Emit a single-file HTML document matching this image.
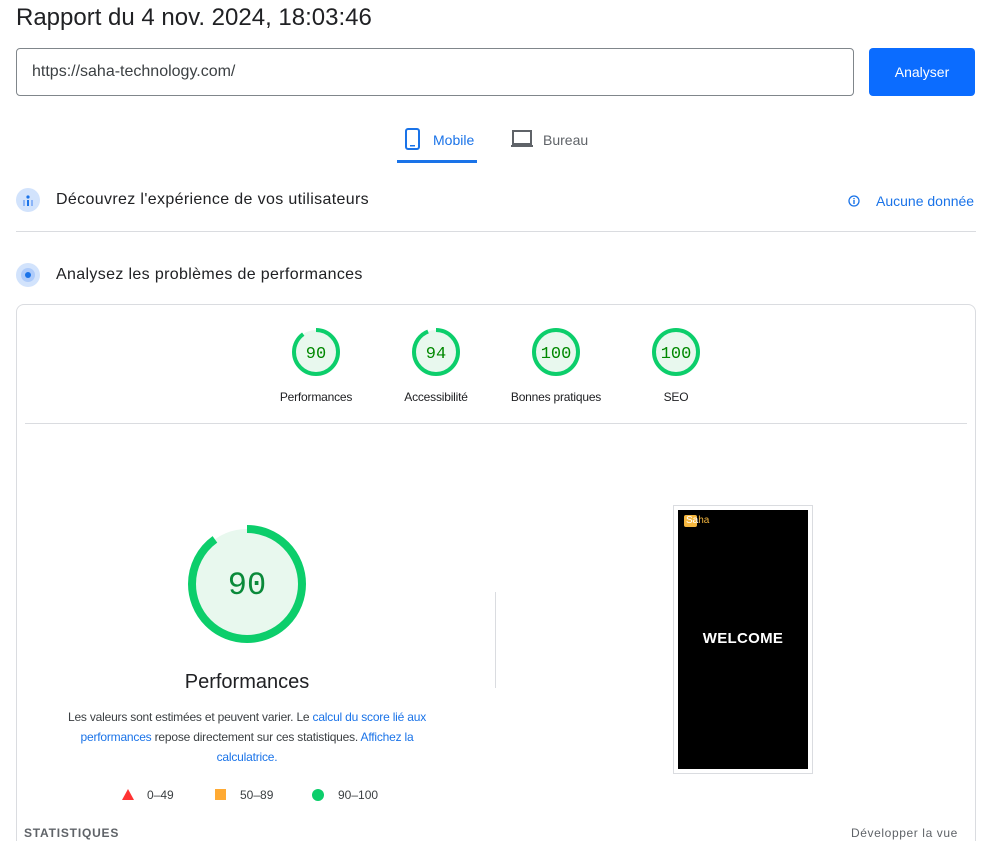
<!DOCTYPE html><html style="width:990px;height:841px;overflow:hidden"><head><style>
body{margin:0;width:990px;height:841px;overflow:hidden;background:#fff;font-family:"Liberation Sans",Roboto,sans-serif;color:#202124;position:relative}
.a{position:absolute}
.lbl{font-size:12px;color:#202124;text-align:center;width:120px;letter-spacing:-0.2px}
</style></head><body>
<div class="a" style="left:16px;top:4px;font-size:24px;">Rapport du 4 nov. 2024, 18:03:46</div>
<div class="a" style="left:16px;top:48px;width:836px;height:46px;border:1px solid #80868b;border-radius:4px;"></div>
<div class="a" style="left:32px;top:63px;font-size:16px;color:#3c4043">https://saha-technology.com/</div>
<div class="a" style="left:869px;top:48px;width:106px;height:48px;background:#0b6cff;border-radius:4px;color:#fff;font-size:14px;line-height:48px;text-align:center;">Analyser</div>
<svg class="a" style="left:403px;top:127px" width="20" height="24"><rect x="3" y="2" width="13" height="20" rx="2" fill="none" stroke="#1a73e8" stroke-width="2"/><rect x="7" y="18" width="5" height="1.5" fill="#1a73e8"/></svg>
<div class="a" style="left:433px;top:132px;font-size:14px;color:#1a73e8;">Mobile</div>
<div class="a" style="left:397px;top:160px;width:80px;height:3px;background:#1a73e8"></div>
<svg class="a" style="left:510px;top:129px" width="24" height="20"><rect x="3" y="2" width="18" height="13" fill="none" stroke="#5f6368" stroke-width="2"/><rect x="1" y="16" width="22" height="2" fill="#5f6368"/></svg>
<div class="a" style="left:543px;top:132px;font-size:14px;color:#5f6368;">Bureau</div>
<svg class="a" style="left:16px;top:188px" width="24" height="24"><circle cx="12" cy="12" r="12" fill="#d2e3fc"/><circle cx="12" cy="9" r="1.6" fill="#1a73e8"/><rect x="7" y="12" width="2" height="6" fill="#8ab4f8"/><rect x="11" y="12" width="2" height="6" fill="#1a73e8"/><rect x="15" y="12" width="2" height="6" fill="#8ab4f8"/></svg>
<div class="a" style="left:56px;top:191px;font-size:16px;letter-spacing:0.35px">Découvrez l'expérience de vos utilisateurs</div>
<svg class="a" style="left:847px;top:194px" width="14" height="14"><circle cx="7" cy="7" r="5" fill="none" stroke="#1a73e8" stroke-width="1.3"/><rect x="6.3" y="6" width="1.4" height="4" fill="#1a73e8"/><rect x="6.3" y="4" width="1.4" height="1.2" fill="#1a73e8"/></svg>
<div class="a" style="left:876px;top:193px;font-size:14px;color:#1a73e8">Aucune donnée</div>
<div class="a" style="left:16px;top:231px;width:960px;height:1px;background:#dadce0"></div>
<svg class="a" style="left:16px;top:263px" width="24" height="24"><circle cx="12" cy="12" r="12" fill="#d2e3fc"/><circle cx="12" cy="12" r="7" fill="#aecbfa"/><circle cx="12" cy="12" r="3" fill="#1a73e8"/></svg>
<div class="a" style="left:56px;top:266px;font-size:16px;letter-spacing:0.35px">Analysez les problèmes de performances</div>
<div class="a" style="left:16px;top:304px;width:958px;height:560px;border:1px solid #dadce0;border-radius:8px;"></div>
<div class="a" style="left:25px;top:423px;width:942px;height:1px;background:#dadce0"></div>
<svg class="a" style="left:0;top:0" width="990" height="841">
<g fill="#e6f4ea" stroke="#0cce6b" stroke-width="4">
<circle cx="316" cy="352" r="22" fill="#e8f8ee" stroke="none"/>
<circle cx="316" cy="352" r="22" fill="none" stroke-dasharray="124.4 138.2" transform="rotate(-90 316 352)"/>
<circle cx="436" cy="352" r="22" fill="#e8f8ee" stroke="none"/>
<circle cx="436" cy="352" r="22" fill="none" stroke-dasharray="129.9 138.2" transform="rotate(-90 436 352)"/>
<circle cx="556" cy="352" r="22" fill="#e8f8ee"/>
<circle cx="676" cy="352" r="22" fill="#e8f8ee"/>
<circle cx="247" cy="584" r="55" fill="#e8f8ee" stroke="none"/>
<circle cx="247" cy="584" r="55" fill="none" stroke-width="8" stroke-dasharray="311 345.6" transform="rotate(-90 247 584)"/>
</g>
<g font-family="Liberation Mono,monospace" fill="#008800" text-anchor="middle">
<text x="316" y="358" font-size="17">90</text><text x="436" y="358" font-size="17">94</text><text x="556" y="358" font-size="17">100</text><text x="676" y="358" font-size="17">100</text>
<text x="247" y="594" font-size="32" fill="#0a8a3a">90</text></g>
<path d="M128 789 L134 800 L122 800Z" fill="#ff3333"/><rect x="215" y="789" width="11" height="11" fill="#ffaa33"/><circle cx="318" cy="795" r="6" fill="#0cce6b"/>
</svg>
<div class="a lbl" style="left:256px;top:390px">Performances</div>
<div class="a lbl" style="left:376px;top:390px">Accessibilité</div>
<div class="a lbl" style="left:496px;top:390px">Bonnes pratiques</div>
<div class="a lbl" style="left:616px;top:390px">SEO</div>
<div class="a" style="left:97px;top:671px;width:300px;text-align:center;font-size:20px">Performances</div>
<div class="a" style="left:57px;top:707px;width:380px;text-align:center;font-size:12px;line-height:20px;color:#3c4043;letter-spacing:-0.2px">Les valeurs sont estimées et peuvent varier. Le <span style="color:#1a73e8">calcul du score lié aux performances</span> repose directement sur ces statistiques. <span style="color:#1a73e8">Affichez la calculatrice.</span></div>
<div class="a" style="left:147px;top:788px;font-size:12px;color:#3c4043">0–49</div>
<div class="a" style="left:240px;top:788px;font-size:12px;color:#3c4043">50–89</div>
<div class="a" style="left:338px;top:788px;font-size:12px;color:#3c4043">90–100</div>
<div class="a" style="left:495px;top:592px;width:1px;height:96px;background:#dadce0"></div>
<div class="a" style="left:673px;top:505px;width:138px;height:267px;border:1px solid #dadce0;background:#fff"></div>
<div class="a" style="left:678px;top:510px;width:130px;height:259px;background:#000"></div>
<div class="a" style="left:684px;top:515px;width:13px;height:12px;background:#f4b63f;border-radius:2px"></div>
<div class="a" style="left:686px;top:515px;font-size:10px;color:#fff">Sa<span style="color:#f4b63f">ha</span></div>
<div class="a" style="left:678px;top:630px;width:130px;text-align:center;color:#fff;font-weight:bold;font-size:15px;letter-spacing:0.3px">WELCOME</div>
<div class="a" style="left:24px;top:826px;font-size:12px;font-weight:bold;letter-spacing:0.8px;color:#5f6368">STATISTIQUES</div>
<div class="a" style="left:851px;top:826px;font-size:12px;color:#5f6368;letter-spacing:0.6px">Développer la vue</div>
</body></html>
